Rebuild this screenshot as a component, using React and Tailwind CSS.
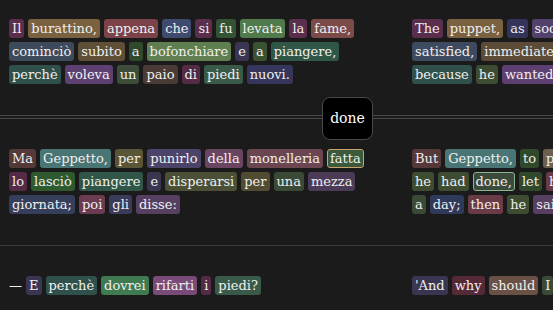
import React from 'react';

const ROWS = [
  {
    it: [
      [['Il', '#5a2e4c'], ['burattino,', '#7a6140'], ['appena', '#7b4349'], ['che', '#3e4a6e'], ['si', '#5a2e4c'], ['fu', '#345234'], ['levata', '#507a4b'], ['la', '#5a2e4c'], ['fame,', '#7b4a49']],
      [['cominciò', '#3d4a5b'], ['subito', '#5f4f37'], ['a', '#30492b'], ['bofonchiare', '#5f7f51'], ['e', '#3a3551'], ['a', '#3a5231'], ['piangere,', '#305647']],
      [['perchè', '#30504b'], ['voleva', '#5e3f71'], ['un', '#3e4d39'], ['paio', '#4b3b36'], ['di', '#552a46'], ['piedi', '#3a5a49'], ['nuovi.', '#36355b']],
    ],
    en: [
      [['The', '#5a2e4c'], ['puppet,', '#7a6140'], ['as', '#34335a'], ['soon', '#51416b'], ['as', '#3e4a6e'], ['his', '#5a2e4c']],
      [['satisfied,', '#3e4a5f'], ['immediately', '#5b4b37'], ['began', '#30492b'], ['to', '#5f7f51']],
      [['because', '#30504b'], ['he', '#3e4d31'], ['wanted', '#5e3f71'], ['a', '#3e4d39'], ['new', '#4b3b36']],
    ],
  },
  {
    it: [
      [['Ma', '#553939'], ['Geppetto,', '#4a7575'], ['per', '#5a5536'], ['punirlo', '#4b4369'], ['della', '#6a4561'], ['monelleria', '#6b4651'], ['fatta', '#3a5a3b', '#c9a26c']],
      [['lo', '#552a46'], ['lasciò', '#2f5a30'], ['piangere', '#305647'], ['e', '#3a3551'], ['disperarsi', '#4b4f36'], ['per', '#504b31'], ['una', '#3a4a36'], ['mezza', '#4b3b56']],
      [['giornata;', '#353f5b'], ['poi', '#6a3b51'], ['gli', '#3a3a5b'], ['disse:', '#563f61']],
    ],
    en: [
      [['But', '#553939'], ['Geppetto,', '#4a7575'], ['to', '#30492b'], ['punish', '#6a6051'], ['him', '#4b4369']],
      [['he', '#3e4d31'], ['had', '#3e4d31'], ['done,', '#3a4a3b', '#8fb28f'], ['let', '#30492b'], ['him', '#6a3b46'], ['cry', '#305647']],
      [['a', '#3a4a36'], ['day;', '#2f3a5b'], ['then', '#6a3b46'], ['he', '#3e4d31'], ['said', '#563f61']],
    ],
  },
  {
    dash: true,
    it: [
      [['E', '#3a3551'], ['perchè', '#30504b'], ['dovrei', '#3f7a51'], ['rifarti', '#7a4a79'], ['i', '#552a46'], ['piedi?', '#3a5a49']],
    ],
    en: [
      [["'And", '#3a3551'], ['why', '#552a36'], ['should', '#6b5046'], ['I', '#3a4a36'], ['make', '#30504b']],
    ],
  },
];

function Word({ text, bg, ring }) {
  return (
    <span
      className={`h-[19px] px-[3px] rounded-[3px] leading-[19px] whitespace-nowrap ${ring ? 'border' : ''}`}
      style={{ backgroundColor: bg, borderColor: ring, lineHeight: ring ? '17px' : undefined, paddingLeft: ring ? 2 : undefined, paddingRight: ring ? 2 : undefined }}
    >
      {text}
    </span>
  );
}

function Column({ lines, dash }) {
  return (
    <div className="flex flex-col gap-y-[4px]">
      {lines.map((line, i) => (
        <div key={i} className="flex gap-x-[4px]">
          {dash && i === 0 && <span className="leading-[19px]">—</span>}
          {line.map(([t, bg, ring], j) => (
            <Word key={j} text={t} bg={bg} ring={ring} />
          ))}
        </div>
      ))}
    </div>
  );
}

function Row({ row, className }) {
  return (
    <div className={`grid grid-cols-[368px_368px] gap-x-[35px] px-[9px] ${className}`}>
      <Column lines={row.it} dash={row.dash} />
      <Column lines={row.en} />
    </div>
  );
}

export default function App() {
  return (
    <div
      className="w-[553px] h-[310px] overflow-hidden bg-[#1b1b1b] text-[#efefef] text-[13px]"
      style={{ fontFamily: '"DejaVu Serif", serif' }}
    >
      <div className="w-[800px]">
        <Row row={ROWS[0]} className="pt-[19px] pb-[31px]" />
        <div className="relative h-[4px] border-y border-[#474747]">
          <button className="absolute left-[322px] top-[-19px] w-[51px] h-[43px] rounded-lg bg-black border border-[#484848] text-white text-[14px]">
            done
          </button>
        </div>
        <Row row={ROWS[1]} className="pt-[30px] pb-[31px]" />
        <div className="h-px bg-[#3a3a3a]" />
        <Row row={ROWS[2]} className="pt-[30px]" />
      </div>
    </div>
  );
}
